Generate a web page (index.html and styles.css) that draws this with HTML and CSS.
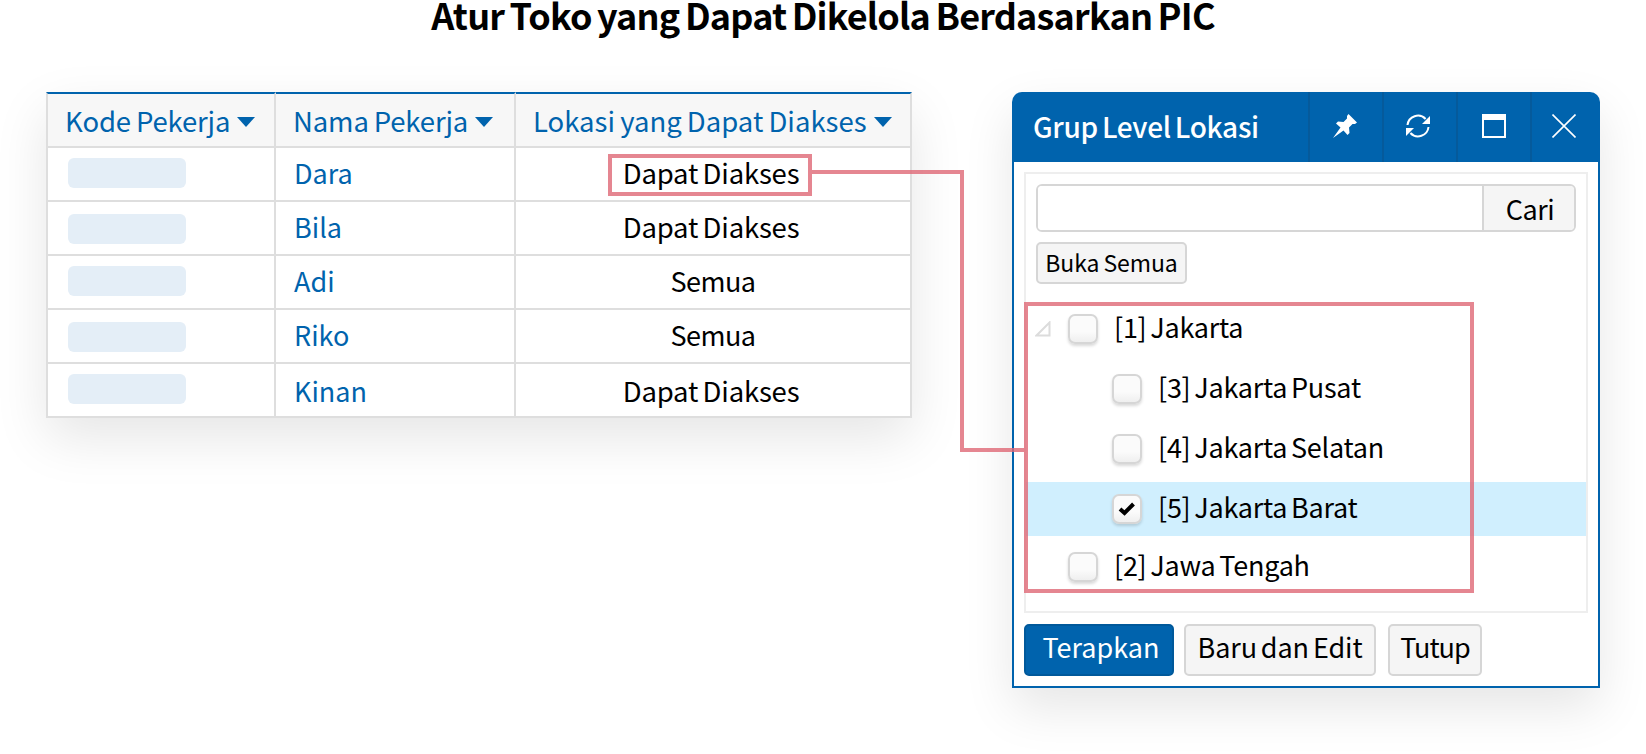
FILE: index.html
```html
<!DOCTYPE html>
<html lang="id">
<head>
<meta charset="utf-8">
<title>Atur Toko</title>
<link rel="stylesheet" href="styles.css">
</head>
<body>
<div class="page">
  <h1 class="title">Atur Toko yang Dapat Dikelola Berdasarkan PIC</h1>
  <div class="stage">
    <table class="grid">
      <colgroup><col class="c1"><col class="c2"><col class="c3"></colgroup>
      <thead>
        <tr>
          <th><span class="th-in">Kode Pekerja<i class="caret"></i></span></th>
          <th><span class="th-in">Nama Pekerja<i class="caret"></i></span></th>
          <th><span class="th-in th-wide">Lokasi yang Dapat Diakses<i class="caret"></i></span></th>
        </tr>
      </thead>
      <tbody>
        <tr><td><div class="pill"></div></td><td class="name">Dara</td><td class="loc">Dapat Diakses</td></tr>
        <tr><td><div class="pill low"></div></td><td class="name">Bila</td><td class="loc">Dapat Diakses</td></tr>
        <tr><td><div class="pill"></div></td><td class="name">Adi</td><td class="loc all">Semua</td></tr>
        <tr><td><div class="pill low"></div></td><td class="name">Riko</td><td class="loc all">Semua</td></tr>
        <tr class="final"><td><div class="pill"></div></td><td class="name">Kinan</td><td class="loc">Dapat Diakses</td></tr>
      </tbody>
    </table>

    <section class="win">
      <header class="win-head">
        <div class="win-title">Grup Level Lokasi</div>
        <div class="tool tool-pin">
          <svg width="24" height="24" viewBox="0 0 24 24"><path fill="#fff" d="M15.5 0 L24 8.5 L22 10 L19.5 10 L16 13.5 L16.5 19 L14.5 21 L10.5 16.5 L0 24 L7.5 13.5 L3 9.5 L5 7.5 L10.5 8 L14 4.5 L14 2 Z"/></svg>
        </div>
        <div class="tool tool-left">
          <svg width="24" height="24" viewBox="0 0 24 24" fill="none" stroke="#fff" stroke-width="2"><path d="M1.5 11 A10.5 10.5 0 0 1 19.6 5"/><path d="M22.5 13 A10.5 10.5 0 0 1 4.4 19"/><path fill="#fff" stroke="none" d="M24 2 V10 H16 Z M0 22 V14 H8 Z"/></svg>
        </div>
        <div class="tool">
          <svg width="24" height="24" viewBox="0 0 24 24" fill="none" stroke="#fff"><rect x="1" y="1" width="22" height="22" stroke-width="2"/><path d="M0 3.5 H24" stroke-width="5"/></svg>
        </div>
        <div class="tool tool-end tool-left">
          <svg width="24" height="24" viewBox="0 0 24 24" fill="none" stroke="#fff" stroke-width="1.6"><path d="M0.5 0.5 L23.5 23.5 M23.5 0.5 L0.5 23.5"/></svg>
        </div>
      </header>
      <div class="win-body">
        <div class="panel">
          <div class="search"><div class="search-input"></div><div class="search-btn">Cari</div></div>
          <div class="btn-small">Buka Semua</div>
          <ul class="tree">
            <li class="node n1"><svg class="twist" width="16" height="16" viewBox="0 0 16 16"><path d="M14.5 1.5 V14.5 H1.5 Z" fill="none" stroke="#dcdcdc" stroke-width="2"/></svg><span class="check"></span><span class="lbl">[1] Jakarta</span></li>
            <li class="node n2"><span class="check"></span><span class="lbl">[3] Jakarta Pusat</span></li>
            <li class="node n2"><span class="check"></span><span class="lbl">[4] Jakarta Selatan</span></li>
            <li class="node n2 sel"><span class="check"><svg width="18" height="16" viewBox="0 0 18 16"><path d="M2 8 L6.5 12 L15.5 3" fill="none" stroke="#000" stroke-width="4"/></svg></span><span class="lbl">[5] Jakarta Barat</span></li>
            <li class="node n1"><span class="check"></span><span class="lbl">[2] Jawa Tengah</span></li>
          </ul>
        </div>
        <div class="actions">
          <div class="btn primary">Terapkan</div>
          <div class="btn edit">Baru dan Edit</div>
          <div class="btn close">Tutup</div>
        </div>
      </div>
    </section>

    <div class="mark mark-cell"></div>
    <div class="mark mark-tree"></div>
    <div class="mark link"></div>
  </div>
</div>
</body>
</html>
```
FILE: styles.css
```css
* { box-sizing: border-box; }
html, body { margin: 0; padding: 0; background: #fff; }
body { font-family: "Noto Sans CJK KR", "Noto Sans", sans-serif; color: #000; width: 1646px; height: 754px; overflow: hidden; }
.page { width: 1646px; height: 754px; }
.title { margin: 0; height: 92px; font-size: 36px; line-height: 28px; font-weight: 700; text-align: center; letter-spacing: -0.8px; word-spacing: -2px; }
.stage { position: relative; display: flex; align-items: flex-start; padding-left: 46px; }

/* table */
.grid { width: 866px; table-layout: fixed; border-collapse: separate; border-spacing: 0; box-shadow: 0 20px 50px rgba(0,0,0,.1); background: #fff; font-size: 27px; }
.c1 { width: 230px; }
.c2 { width: 240px; }
.c3 { width: 396px; }
.grid th, .grid td { padding: 0; border-right: 2px solid #dedede; border-bottom: 2px solid #dedede; }
.grid th:first-child, .grid td:first-child { border-left: 2px solid #dedede; }
.grid th { height: 56px; background: #f7f7f7; border-top: 2px solid #0063ad; color: #0063ad; font-weight: 400; font-size: 27.5px; letter-spacing: -0.15px; word-spacing: -1px; text-align: left; }
.th-in { display: flex; align-items: center; padding-left: 17px; height: 52px; }
.th-wide { letter-spacing: 0; }
.caret { display: inline-block; margin-left: 7px; margin-top: 4px; border-left: 9px solid transparent; border-right: 9px solid transparent; border-top: 10px solid #0063ad; }
.grid td { height: 54px; line-height: 50px; vertical-align: middle; }
.pill { width: 118px; height: 30px; margin: -2px 0 0 20px; border-radius: 6px; background: #e4eef7; }
.pill.low { margin-top: 2px; }
.grid td.name { color: #0063ad; padding: 0 0 2px 18px; }
.grid td.loc { text-align: center; line-height: 48px; padding: 0 4px 4px 0; font-size: 27.5px; letter-spacing: -0.2px; word-spacing: -1.5px; }
.grid td.loc.all { line-height: 50px; padding: 0 0 2px; font-size: 27px; letter-spacing: -0.5px; }
.grid .final td.name { padding-bottom: 0; padding-top: 2px; }
.grid .final td.loc { line-height: 50px; padding-bottom: 0; padding-top: 0; }

/* window */
.win { width: 588px; margin-left: 100px; border-radius: 10px 10px 0 0; box-shadow: 0 20px 50px rgba(0,0,0,.1); background: #fff; }
.win-head { display: flex; height: 70px; background: #0063ad; border-radius: 10px 10px 0 0; color: #fff; }
.win-title { flex: 1; font-size: 28px; font-weight: 500; line-height: 68px; padding-left: 21px; word-spacing: -2px; letter-spacing: -0.3px; }
.tool { width: 74px; border-left: 2px solid #055a9b; display: flex; align-items: center; justify-content: center; padding-bottom: 2px; }
.tool-pin { padding-right: 2px; }
.tool-left { padding-right: 4px; }
.tool-end { width: 70px; }
.win-body { border: 2px solid #0063ad; border-top: 0; height: 526px; padding: 10px 10px 0; }
.panel { height: 441px; border: 2px solid #eee; padding: 10px; }
.search { display: flex; height: 48px; border: 2px solid #d6d6d6; border-radius: 6px; overflow: hidden; }
.search-input { flex: 1; background: #fff; }
.search-btn { width: 92px; padding-left: 2px; background: #f5f5f5; border-left: 2px solid #d6d6d6; font-size: 27px; line-height: 46px; text-align: center; letter-spacing: -0.4px; }
.btn-small { width: 151px; height: 42px; margin-top: 10px; background: #f5f5f5; border: 2px solid #d6d6d6; border-radius: 5px; font-size: 23px; line-height: 36px; text-align: center; word-spacing: -1px; letter-spacing: -0.1px; }
.tree { list-style: none; margin: 15px -10px 0; padding: 0; font-size: 27px; letter-spacing: -0.25px; word-spacing: -2px; }
.node { display: flex; align-items: center; height: 60px; }
.node.n1 { padding-left: 42px; position: relative; }
.node.n2 { padding-left: 86px; }
.node.sel { background: #d0effe; height: 54px; margin: 3px 0 1px; }
.twist { position: absolute; left: 9px; top: 22px; }
.check { width: 30px; height: 30px; margin-right: 16px; flex: none; border: 2px solid #d6d6d6; border-radius: 7px; background: linear-gradient(#fbfbfb 60%, #efefef); box-shadow: 0 2px 3px rgba(0,0,0,.15); display: flex; align-items: center; justify-content: center; }
.lbl { margin-bottom: 6px; }
.actions { display: flex; margin-top: 11px; }
.btn { height: 52px; border-radius: 5px; font-size: 27px; line-height: 42px; text-align: center; background: #f5f5f5; border: 2px solid #d6d6d6; }
.btn.primary { width: 150px; padding-left: 4px; background: #0063ad; border-color: #00599b; color: #fff; }
.btn.edit { width: 192px; margin-left: 10px; word-spacing: -2px; letter-spacing: -0.1px; }
.btn.close { width: 94px; margin-left: 12px; letter-spacing: -1px; }

/* pink annotations */
.mark { position: absolute; border: 0 solid rgba(222,104,117,.8); pointer-events: none; }
.mark-cell { left: 608px; top: 62px; width: 204px; height: 42px; border-width: 4px; }
.mark-tree { left: 1024px; top: 210px; width: 450px; height: 291px; border-width: 4px; }
.link { left: 812px; top: 78px; width: 152px; height: 282px; border-width: 4px 4px 0 0; }
.link::after { content: ""; position: absolute; left: 152px; bottom: 0; width: 60px; height: 4px; background: rgba(222,104,117,.8); }
```
